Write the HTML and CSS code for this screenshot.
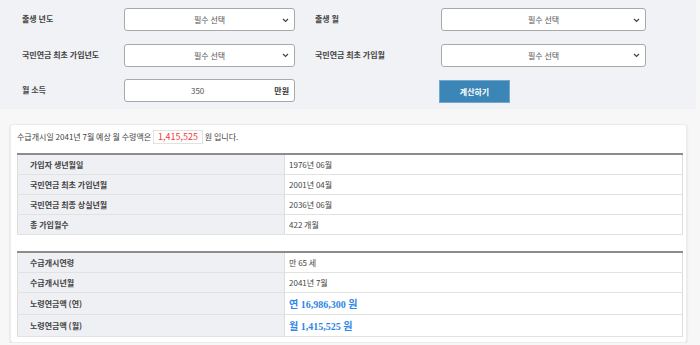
FILE: index.html
```html
<!doctype html>
<html>
<head>
	<meta charset="utf-8">
	<title>국민연금 예상 수령액 계산</title>
	<link rel="stylesheet" href="styles.css">
</head>
<body>
	<form class="calc" name="form1">
		<div class="calc-grid">
			<label class="lbl">출생 년도</label>
			<div class="field">
				<select class="sel"><option>필수 선택</option></select>
				<svg class="chev" width="7" height="5" viewBox="0 0 7 5"><path d="M1 1l2.5 2.5L6 1" fill="none" stroke="#444" stroke-width="1.2"/></svg>
			</div>
			<label class="lbl lbl-right">출생 월</label>
			<div class="field">
				<select class="sel"><option>필수 선택</option></select>
				<svg class="chev" width="7" height="5" viewBox="0 0 7 5"><path d="M1 1l2.5 2.5L6 1" fill="none" stroke="#444" stroke-width="1.2"/></svg>
			</div>

			<label class="lbl">국민연금 최초 가입년도</label>
			<div class="field">
				<select class="sel"><option>필수 선택</option></select>
				<svg class="chev" width="7" height="5" viewBox="0 0 7 5"><path d="M1 1l2.5 2.5L6 1" fill="none" stroke="#444" stroke-width="1.2"/></svg>
			</div>
			<label class="lbl lbl-right">국민연금 최초 가입월</label>
			<div class="field">
				<select class="sel"><option>필수 선택</option></select>
				<svg class="chev" width="7" height="5" viewBox="0 0 7 5"><path d="M1 1l2.5 2.5L6 1" fill="none" stroke="#444" stroke-width="1.2"/></svg>
			</div>

			<label class="lbl">월 소득</label>
			<div class="field">
				<input type="text" class="num" value="350">
				<span class="unit">만원</span>
			</div>
			<span class="lbl lbl-right"></span>
			<div class="btn-cell">
				<button type="button" class="btn-calc">계산하기</button>
			</div>
		</div>
	</form>

	<div class="result">
		<p class="summary">수급개시일 2041년 7월 예상 월 수령액은 <span class="amount">1,415,525</span> 원 입니다.</p>
		<table class="info">
			<tr><th>가입자 생년월일</th><td>1976년 06월</td></tr>
			<tr><th>국민연금 최초 가입년월</th><td>2001년 04월</td></tr>
			<tr><th>국민연금 최종 상실년월</th><td>2036년 06월</td></tr>
			<tr><th>총 가입월수</th><td>422 개월</td></tr>
		</table>
		<table class="info info-2">
			<tr><th>수급개시연령</th><td>만 65 세</td></tr>
			<tr><th>수급개시년월</th><td>2041년 7월</td></tr>
			<tr class="big"><th>노령연금액 (연)</th><td><b class="money">연 16,986,300 원</b></td></tr>
			<tr class="big"><th>노령연금액 (월)</th><td><b class="money">월 1,415,525 원</b></td></tr>
		</table>
	</div>
</body>
</html>
```

FILE: styles.css
```css
body {
	margin: 0;
	background-color: #f7f7f7;
	font-family: "Noto Sans CJK KR", "Noto Sans", sans-serif;
	font-size: 8px;
	color: #333;
}
.calc {
	width: 696px;
	margin: 0;
	padding: 8px 0 7px;
	background-color: #f1f2f5;
}
.calc-grid {
	display: grid;
	grid-template-columns: 102px 171px 146px 205px;
	grid-auto-rows: 23px;
	row-gap: 12.5px;
	padding-left: 22px;
}
.lbl {
	display: flex;
	align-items: center;
	font-weight: 700;
	color: #444;
	margin-top: -2px;
}
.lbl-right {
	padding-left: 20px;
}
.field {
	display: flex;
	align-items: center;
	background: #fff;
	border: 1px solid #a9a9a9;
	border-radius: 3px;
	box-sizing: border-box;
}
.sel {
	flex: 1;
	height: 100%;
	border: 0;
	outline: 0;
	background: transparent;
	-webkit-appearance: none;
	appearance: none;
	font-family: inherit;
	font-size: 8px;
	color: #555;
	text-align: center;
	text-align-last: center;
	padding: 0 0 0 12px;
}
.chev {
	margin: 1px 5px 0 0;
	pointer-events: none;
}
.num {
	flex: 1;
	min-width: 0;
	height: 100%;
	border: 0;
	outline: 0;
	background: transparent;
	font-family: inherit;
	font-size: 8px;
	color: #555;
	text-align: center;
	padding: 0;
}
.unit {
	font-weight: 700;
	color: #333;
	padding: 0 5px 0 4px;
}
.btn-cell {
	display: flex;
	align-items: center;
}
.btn-calc {
	width: 71px;
	height: 23px;
	margin: 2px 0 0 -2px;
	background-color: #3b86b6;
	border: 1px solid #73a8cb;
	color: #fff;
	font-family: inherit;
	font-size: 8px;
	font-weight: 700;
	cursor: pointer;
}
.result {
	width: 677px;
	margin: 15px 0 0 10px;
	padding: 4px 5px 5px 6px;
	box-sizing: border-box;
	background: #fff;
	border: 1px solid #ececec;
	border-radius: 3px;
	box-shadow: 0 1px 2px rgba(0,0,0,.15);
}
.summary {
	margin: 0 0 8px;
	line-height: 16px;
	color: #444;
}
.amount {
	display: inline-block;
	line-height: 12px;
	padding: 0 4px;
	border: 1px solid #e2e2e2;
	color: #f23b3b;
	font-size: 9px;
}
.info {
	width: 666px;
	border-collapse: collapse;
	border: 1px solid #dcdcdc;
	border-top: 2px solid #8c8c8c;
}
.info-2 {
	margin-top: 16px;
}
.info th,
.info td {
	height: 19px;
	padding: 0 0 0 12px;
	text-align: left;
	border-bottom: 1px solid #e2e2e2;
	color: #444;
}
.info th {
	width: 254px;
	background-color: #eff0f3;
	border-right: 1px solid #dcdcdc;
	font-weight: 700;
}
.info td {
	padding-left: 4px;
}
.info tr.big th,
.info tr.big td {
	height: 21px;
}
.money {
	font-family: "Liberation Serif", "Noto Sans CJK KR", serif;
	font-size: 10px;
	color: #2f86e6;
}
```
